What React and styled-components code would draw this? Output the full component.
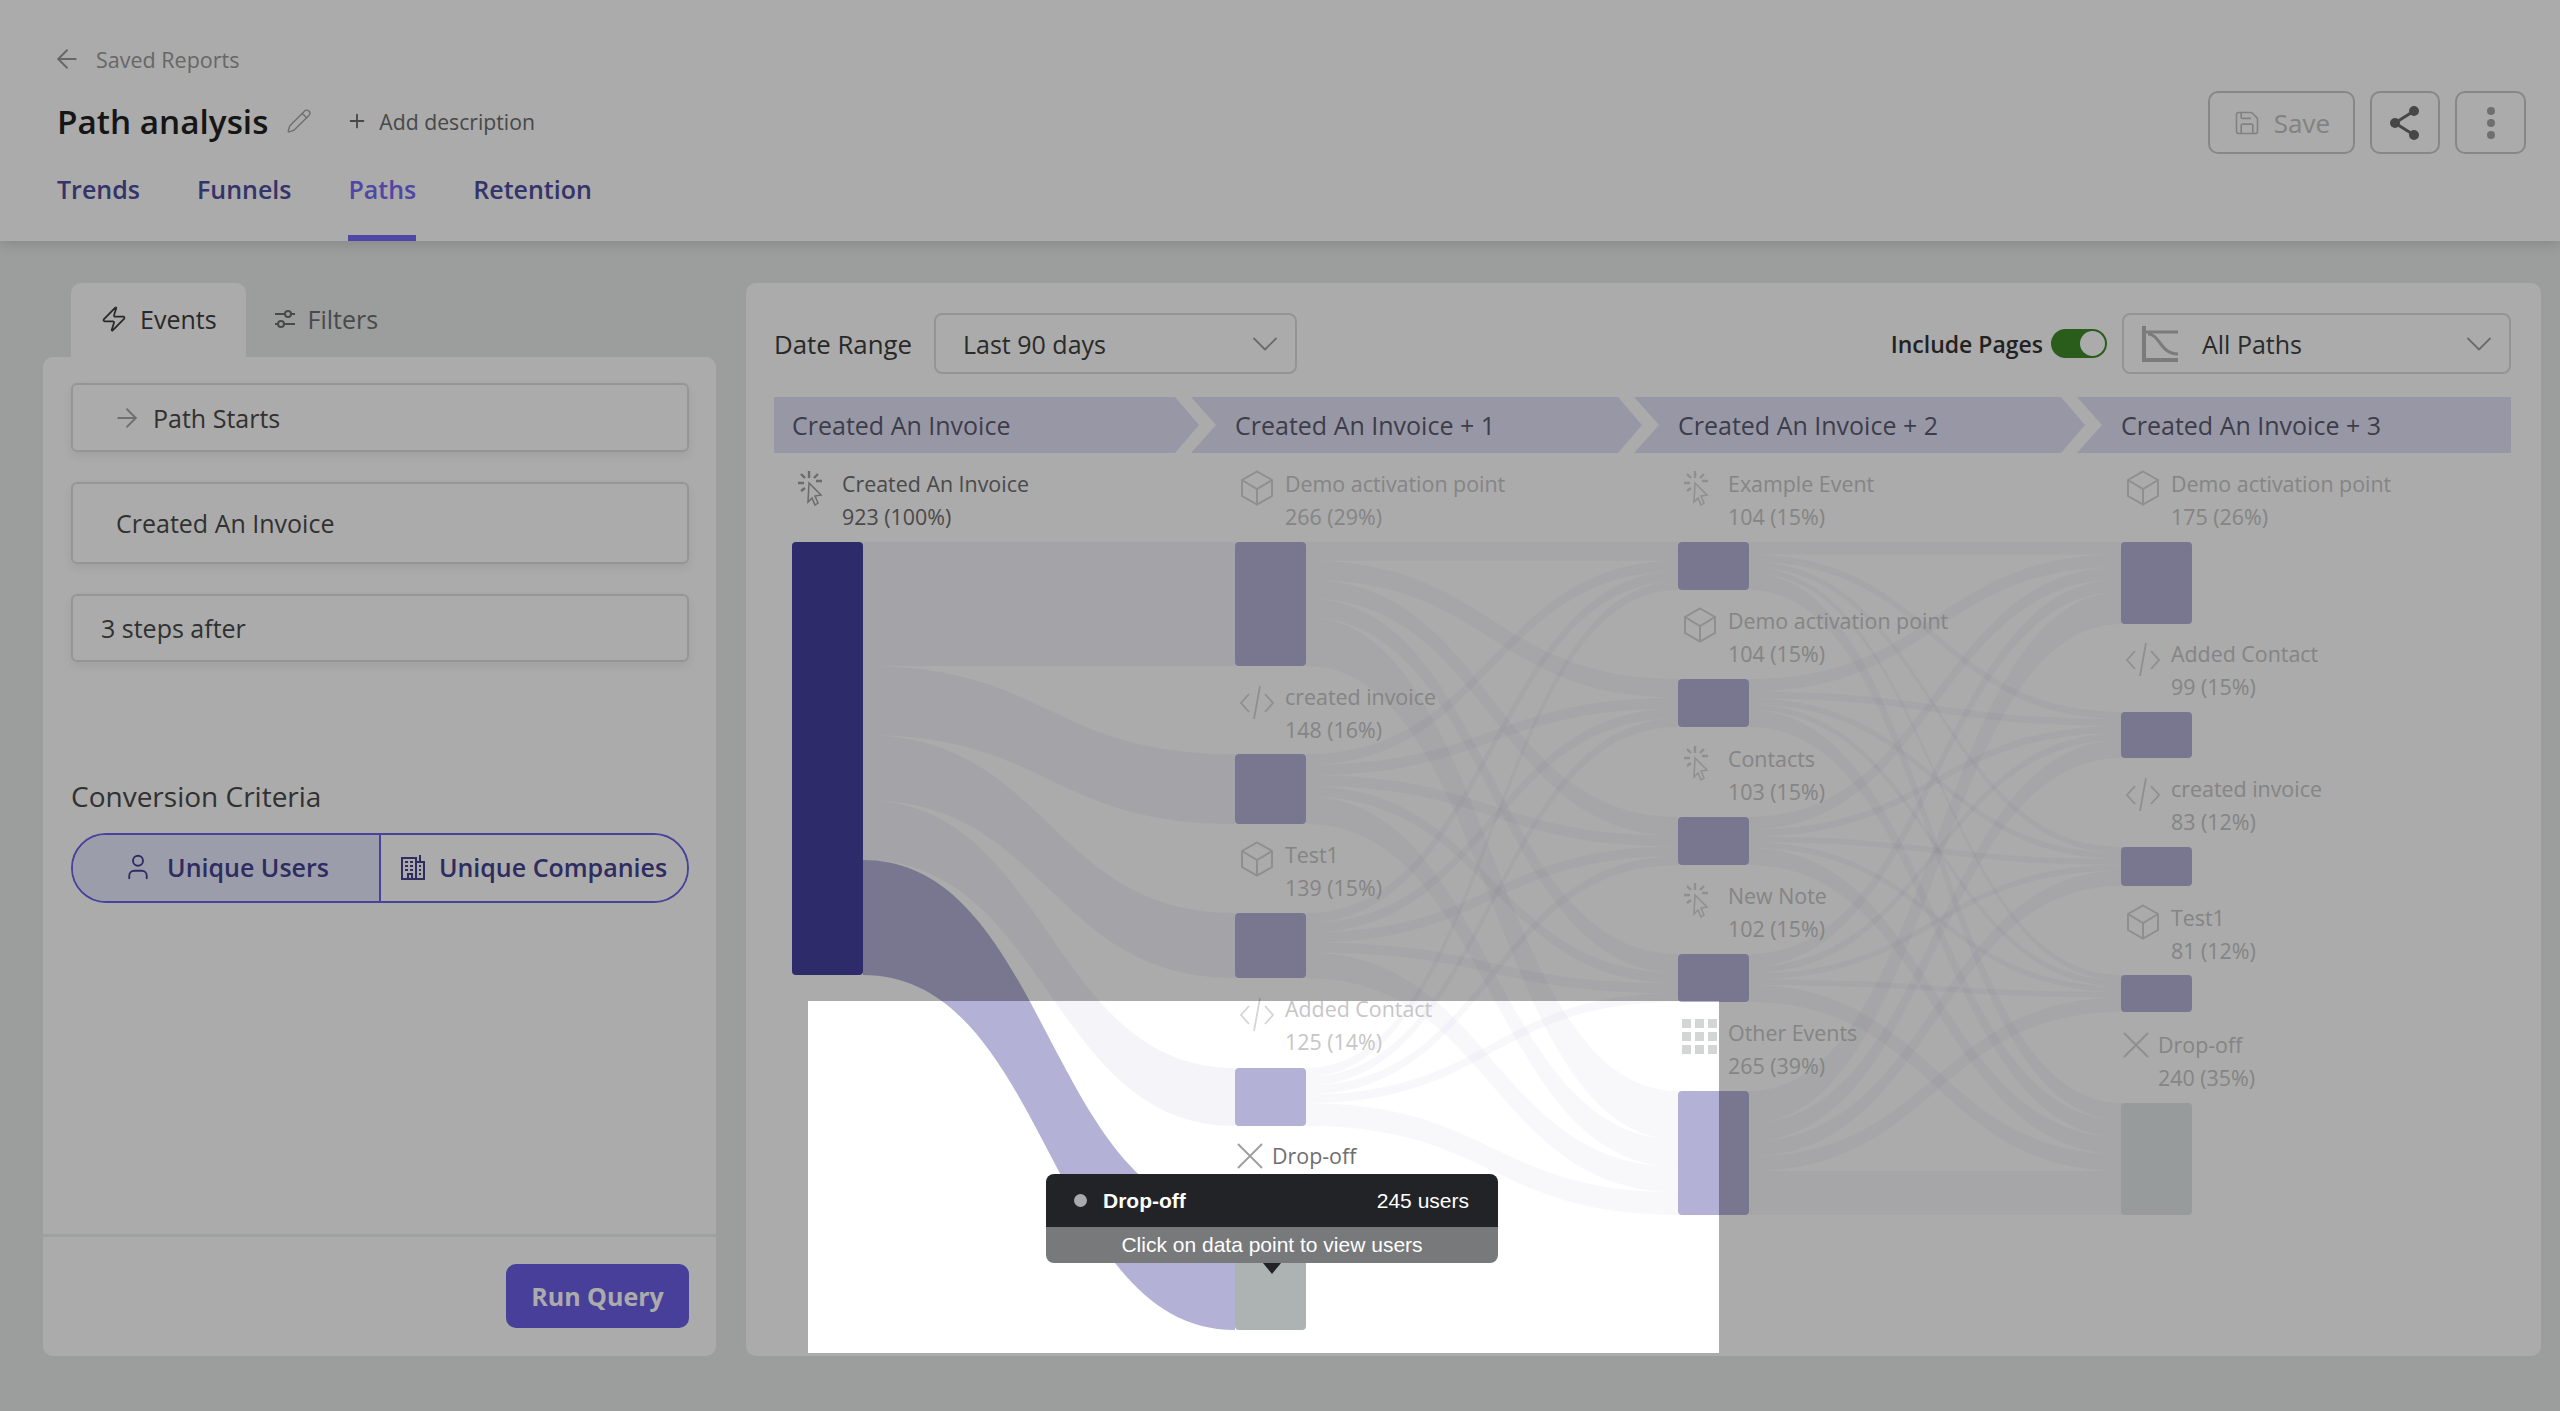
import React from "react";
import styled, { createGlobalStyle } from "styled-components";
import { ArrowLeft, ArrowRight, Pencil, Plus, Zap, User, Save, ChevronDown } from "lucide-react";

const GlobalStyle = createGlobalStyle`
  html, body {
    margin: 0;
    padding: 0;
    background: #e9ecec;
    font-family: "Open Sans", "Noto Sans", sans-serif;
  }
  * {
    box-sizing: border-box;
  }
`;

// chart origin on the page, link coordinates are page based
const CHART_X = 774;
const CHART_Y = 453;
const NODE_W = 71;
const COL_X = [792, 1235, 1678, 2122];

const columns = [
  [{ kind: "click", name: "Created An Invoice", value: "923 (100%)", line: 483, y0: 542, y1: 975, tone: "active", strong: true }],
  [
    { kind: "cube", name: "Demo activation point", value: "266 (29%)", line: 483, y0: 542, y1: 666, tone: "step" },
    { kind: "code", name: "created invoice", value: "148 (16%)", line: 696, y0: 754, y1: 824, tone: "step" },
    { kind: "cube", name: "Test1", value: "139 (15%)", line: 854, y0: 913, y1: 978, tone: "step" },
    { kind: "code", name: "Added Contact", value: "125 (14%)", line: 1008, y0: 1068, y1: 1126, tone: "step" },
    { kind: "drop", name: "Drop-off", line: 1155, y0: 1215, y1: 1330, tone: "dropActive", strong: true },
  ],
  [
    { kind: "click", name: "Example Event", value: "104 (15%)", line: 483, y0: 542, y1: 590, tone: "step" },
    { kind: "cube", name: "Demo activation point", value: "104 (15%)", line: 620, y0: 679, y1: 727, tone: "step" },
    { kind: "click", name: "Contacts", value: "103 (15%)", line: 758, y0: 817, y1: 865, tone: "step" },
    { kind: "click", name: "New Note", value: "102 (15%)", line: 895, y0: 954, y1: 1002, tone: "step" },
    { kind: "grid", name: "Other Events", value: "265 (39%)", line: 1032, y0: 1091, y1: 1215, tone: "step" },
  ],
  [
    { kind: "cube", name: "Demo activation point", value: "175 (26%)", line: 483, y0: 542, y1: 624, tone: "step" },
    { kind: "code", name: "Added Contact", value: "99 (15%)", line: 653, y0: 712, y1: 758, tone: "step" },
    { kind: "code", name: "created invoice", value: "83 (12%)", line: 788, y0: 847, y1: 886, tone: "step" },
    { kind: "cube", name: "Test1", value: "81 (12%)", line: 917, y0: 975, y1: 1012, tone: "step" },
    { kind: "drop", name: "Drop-off", value: "240 (35%)", line: 1044, y0: 1103, y1: 1215, tone: "drop" },
  ],
];

const ribbon = (x0, a0, b0, x1, a1, b1) => {
  const xm = (x0 + x1) / 2;
  return `M${x0} ${a0}C${xm} ${a0} ${xm} ${a1} ${x1} ${a1}L${x1} ${b1}C${xm} ${b1} ${xm} ${b0} ${x0} ${b0}Z`;
};

// splits every node of one column over every node of the next one
const spread = (from, to, x0, x1) => {
  const src = from.filter((n) => n.kind !== "drop");
  const srcTotal = src.reduce((s, n) => s + n.y1 - n.y0, 0);
  const dstTotal = to.reduce((s, n) => s + n.y1 - n.y0, 0);
  const used = to.map(() => 0);
  const out = [];
  src.forEach((s) => {
    let off = 0;
    to.forEach((t, i) => {
      const a = ((s.y1 - s.y0) * (t.y1 - t.y0)) / dstTotal;
      const b = ((t.y1 - t.y0) * (s.y1 - s.y0)) / srcTotal;
      out.push(ribbon(x0, s.y0 + off, s.y0 + off + a, x1, t.y0 + used[i], t.y0 + used[i] + b));
      off += a;
      used[i] += b;
    });
  });
  return out;
};

const firstLinks = [
  ribbon(863, 542, 666, 1235, 542, 666),
  ribbon(863, 666, 735, 1235, 754, 824),
  ribbon(863, 735, 800, 1235, 913, 978),
  ribbon(863, 800, 860, 1235, 1068, 1126),
];
const crossLinks = [
  ...spread(columns[1], columns[2], 1306, 1678),
  ...spread(columns[2], columns[3], 1749, 2122),
];
const dropLink = ribbon(863, 860, 975, 1235, 1215, 1330);

const Page = styled.div`
  position: relative;
  width: 2560px;
  height: 1411px;
  overflow: hidden;
  display: flex;
  flex-direction: column;
  background: #e9ecec;
  color: #3c3c3c;
`;

const Spotlight = styled.div`
  position: absolute;
  z-index: 5;
  left: 808px;
  top: 1001px;
  width: 911px;
  height: 352px;
  box-shadow: 0 0 0 3200px rgba(0, 0, 0, 0.33);
  pointer-events: none;
`;

const Header = styled.header`
  height: 241px;
  flex: none;
  display: flex;
  justify-content: space-between;
  padding: 0 34px 0 57px;
  background: #fff;
  box-shadow: 0 2px 14px rgba(0, 0, 0, 0.16);
  z-index: 1;
`;

const HeaderLeft = styled.div`
  display: flex;
  flex-direction: column;
`;

const Crumb = styled.div`
  display: flex;
  align-items: center;
  gap: 14px;
  height: 30px;
  margin-top: 44px;
  font-size: 21.5px;
  color: #9a9a9a;
  svg {
    margin-left: -5px;
  }
`;

const TitleRow = styled.div`
  display: flex;
  align-items: center;
  height: 48px;
  margin-top: 23px;
`;

const Title = styled.h1`
  margin: 0;
  font-size: 33.3px;
  font-weight: 600;
  color: #222;
`;

const AddNote = styled.div`
  display: flex;
  align-items: center;
  gap: 11px;
  margin-left: 34px;
  font-size: 21.2px;
  color: #6c6c6c;
`;

const PencilMark = styled(Pencil)`
  margin-left: 18px;
  color: #a6a6a6;
`;

const TabRow = styled.nav`
  display: flex;
  gap: 57px;
  margin-top: 24px;
`;

const Tab = styled.div`
  height: 72px;
  padding-top: 1px;
  font-size: 25px;
  font-weight: 600;
  line-height: 38px;
  color: ${(p) => (p.$active ? "#7669f6" : "#4e4e9e")};
  border-bottom: ${(p) => (p.$active ? "6px solid #7669f6" : "6px solid transparent")};
`;

const HeaderActions = styled.div`
  display: flex;
  gap: 15px;
  margin-top: 91px;
`;

const OutlineButton = styled.button`
  display: flex;
  align-items: center;
  justify-content: center;
  gap: 13px;
  width: ${(p) => p.$w}px;
  height: 63px;
  padding: 0;
  background: #fff;
  border: 2px solid #c8cbcb;
  border-radius: 10px;
  font: 500 26px "Open Sans", sans-serif;
  color: #c2c2c2;
`;

const Body = styled.main`
  display: flex;
  gap: 30px;
  flex: 1;
  min-height: 0;
  padding: 42px 19px 55px 43px;
`;

const Side = styled.aside`
  flex: none;
  width: 673px;
  display: flex;
  flex-direction: column;
`;

const SideTabs = styled.div`
  display: flex;
  height: 74px;
  margin-left: 28px;
`;

const SideTab = styled.div`
  display: flex;
  align-items: center;
  gap: 12px;
  padding: 0 ${(p) => (p.$active ? "29px" : "28px")} 2px ${(p) => (p.$active ? "29px" : "28px")};
  border-radius: 10px 10px 0 0;
  font-size: 25px;
  font-weight: 500;
  color: ${(p) => (p.$active ? "#3c3c3c" : "#6e6e6e")};
  background: ${(p) => (p.$active ? "#fff" : "transparent")};
`;

const SideCard = styled.div`
  flex: 1;
  display: flex;
  flex-direction: column;
  background: #fff;
  border-radius: 10px;
`;

const SideForm = styled.div`
  flex: 1;
  padding: 26px 27px 0 28px;
`;

const Field = styled.div`
  display: flex;
  align-items: center;
  gap: 11px;
  height: ${(p) => p.$h}px;
  margin-bottom: 30px;
  padding-left: ${(p) => p.$pad}px;
  border: 2px solid #dde0e0;
  border-radius: 6px;
  box-shadow: 0 4px 10px rgba(0, 0, 0, 0.07);
  font-size: 25px;
  color: #4a4a4a;
  svg {
    color: #a8a8a8;
  }
`;

const SectionTitle = styled.h3`
  margin: 114px 0 17px;
  height: 40px;
  font-size: 28px;
  font-weight: 500;
  line-height: 40px;
  color: #4a4a4a;
`;

const Segments = styled.div`
  display: grid;
  grid-template-columns: 306px 1fr;
  height: 70px;
  border: 2px solid #6a63e6;
  border-radius: 35px;
  overflow: hidden;
`;

const Segment = styled.div`
  display: flex;
  align-items: center;
  justify-content: center;
  gap: 14px;
  padding-bottom: 2px;
  font-size: 25px;
  font-weight: 600;
  white-space: nowrap;
  color: #454290;
  background: ${(p) => (p.$active ? "#e9ebff" : "#fff")};
  & + & {
    border-left: 2px solid #6a63e6;
  }
`;

const SideFooter = styled.div`
  display: flex;
  justify-content: flex-end;
  height: 122px;
  padding: 27px 27px 0 0;
  border-top: 3px solid #eef0f0;
`;

const RunButton = styled.button`
  width: 183px;
  height: 64px;
  background: #6b5fe6;
  border: 0;
  border-radius: 10px;
  font: 700 25px "Open Sans", sans-serif;
  color: #fff;
`;

const Report = styled.section`
  flex: 1;
  min-width: 0;
  display: flex;
  flex-direction: column;
  padding: 30px 30px 0 28px;
  background: #fff;
  border-radius: 10px;
`;

const Toolbar = styled.div`
  display: flex;
  align-items: center;
  height: 61px;
`;

const FieldLabel = styled.span`
  font-size: 25.8px;
  font-weight: 500;
  margin-right: 22px;
  color: #3c3c3c;
`;

const Select = styled.div`
  display: flex;
  align-items: center;
  justify-content: space-between;
  width: ${(p) => p.$w}px;
  height: 61px;
  padding: 0 8px 0 ${(p) => p.$pad}px;
  border: 2px solid #dcdfdf;
  border-radius: 8px;
  font-size: 25px;
  color: #404040;
  svg.chevron {
    color: #a0a0a0;
  }
`;

const SelectText = styled.span`
  display: flex;
  align-items: center;
  gap: 24px;
`;

const Toggles = styled.div`
  display: flex;
  align-items: center;
  gap: 8px;
  margin-left: auto;
  margin-right: 15px;
  font-size: 23px;
  font-weight: 600;
  color: #333;
`;

const Toggle = styled.span`
  position: relative;
  display: block;
  width: 56px;
  height: 29px;
  border-radius: 15px;
  background: #3f8a2a;
  &::after {
    content: "";
    position: absolute;
    right: 2px;
    top: 2px;
    width: 25px;
    height: 25px;
    border-radius: 50%;
    background: #fff;
  }
`;

const Steps = styled.div`
  display: flex;
  height: 56px;
  margin-top: 23px;
`;

const Step = styled.div`
  display: flex;
  align-items: center;
  flex: none;
  width: ${(p) => p.$w}px;
  margin-left: ${(p) => (p.$first ? 0 : -8)}px;
  padding-left: ${(p) => (p.$first ? 18 : 44)}px;
  background: #e2e2f8;
  font-size: 25px;
  color: #5c5c6e;
  clip-path: ${(p) =>
    p.$first
      ? "polygon(0 0, calc(100% - 24px) 0, 100% 50%, calc(100% - 24px) 100%, 0 100%)"
      : p.$last
        ? "polygon(0 0, 100% 0, 100% 100%, 0 100%, 25px 50%)"
        : "polygon(0 0, calc(100% - 24px) 0, 100% 50%, calc(100% - 24px) 100%, 0 100%, 25px 50%)"};
`;

const Chart = styled.div`
  position: relative;
  flex: 1;
  display: grid;
  grid-template-columns: repeat(4, 443px);
  align-content: start;
  padding-left: 18px;
`;

const Links = styled.svg`
  position: absolute;
  left: 0;
  top: 0;
  width: 1737px;
  height: 900px;
  overflow: visible;
`;

const Column = styled.div`
  position: relative;
  display: flex;
  flex-direction: column;
`;

const Label = styled.div`
  position: relative;
  height: 66px;
  margin-top: ${(p) => p.$top}px;
  padding-left: ${(p) => (p.$short ? 37 : 50)}px;
  font-size: 21.4px;
  line-height: 33px;
  white-space: nowrap;
  color: ${(p) => (p.$strong ? "#6e6e6e" : "#c6c6c6")};
`;

const LabelIcon = styled.span`
  position: absolute;
  left: ${(p) => (p.$short ? 2 : 4)}px;
  top: ${(p) => (p.$short ? 4 : 3)}px;
  line-height: 0;
  color: ${(p) => (p.$strong ? "#a0a0a0" : "#d4d6d6")};
`;

const Node = styled.div`
  flex: none;
  width: ${NODE_W}px;
  height: ${(p) => p.$h}px;
  margin-top: ${(p) => p.$top}px;
  border-radius: 4px;
  background: ${(p) =>
    ({ active: "#4540a0", step: "#b3b2d6", dropActive: "#adb3b3", drop: "#e3e7e7" })[p.$tone]};
`;

const Tooltip = styled.div`
  position: absolute;
  left: 272px;
  top: 721px;
  width: 452px;
  border-radius: 8px;
  font-family: "Liberation Sans", Arial, sans-serif;
  color: #fff;
  &::after {
    content: "";
    position: absolute;
    left: 217px;
    bottom: -11px;
    border-style: solid;
    border-width: 11px 9px 0;
    border-color: #212327 transparent transparent;
  }
`;

const TipHead = styled.div`
  display: flex;
  align-items: center;
  justify-content: space-between;
  height: 53px;
  padding: 0 29px 0 28px;
  background: #212327;
  border-radius: 8px 8px 0 0;
  font-size: 21px;
`;

const TipName = styled.span`
  display: flex;
  align-items: center;
  gap: 16px;
  font-weight: 700;
  &::before {
    content: "";
    width: 13px;
    height: 13px;
    border-radius: 50%;
    background: #a9aaac;
  }
`;

const TipFoot = styled.div`
  height: 36px;
  background: #78797b;
  border-radius: 0 0 8px 8px;
  font-size: 21px;
  line-height: 35px;
  text-align: center;
`;

const ClickIcon = () => (
  <svg width="31" height="36" viewBox="0 0 31 36" fill="none" stroke="currentColor" strokeWidth="2">
    <path d="M13 1v7M2 13h6M20 11h6M5 4l4 4M22 4l-4 4M5 21l4-3" strokeWidth="2.4" />
    <path d="M13 13l12 12-6 1 3 7-3 2-3-7-4 4z" strokeWidth="1.5" />
  </svg>
);

const CubeIcon = () => (
  <svg width="36" height="36" viewBox="0 0 36 36" fill="none" stroke="currentColor" strokeWidth="2">
    <path d="M18 1.5L33 10v16l-15 8.5L3 26V10z" />
    <path d="M3 10l15 9 15-9M18 19v15" />
  </svg>
);

const CodeIcon = () => (
  <svg width="36" height="36" viewBox="0 0 36 36" fill="none" stroke="currentColor" strokeWidth="1.8">
    <path d="M10 11L2 20l8 9M26 11l8 9-8 9M21 3l-6 33" />
  </svg>
);

const GridIcon = () => (
  <svg width="36" height="36" viewBox="0 0 36 36" fill="currentColor">
    {[0, 13, 26].map((y) =>
      [0, 13, 26].map((x) => <rect key={`${x}-${y}`} x={x} y={y} width="9" height="9" />)
    )}
  </svg>
);

const DropIcon = () => (
  <svg width="26" height="26" viewBox="0 0 26 26" fill="none" stroke="currentColor" strokeWidth="2">
    <path d="M1 1l24 24M25 1L1 25" />
  </svg>
);

const icons = { click: ClickIcon, cube: CubeIcon, code: CodeIcon, grid: GridIcon, drop: DropIcon };

const FiltersIcon = () => (
  <svg width="22" height="24" viewBox="0 0 22 24" fill="none" stroke="currentColor" strokeWidth="2">
    <path d="M1 7h10M17 7h4M1 17h3M10 17h11" />
    <circle cx="14" cy="7" r="3" />
    <circle cx="7" cy="17" r="3" />
  </svg>
);

const ShareIcon = () => (
  <svg width="30" height="34" viewBox="0 0 30 34" fill="#6b6b6b" stroke="#6b6b6b" strokeWidth="3">
    <circle cx="24" cy="5" r="3.5" />
    <circle cx="5" cy="17" r="3.5" />
    <circle cx="24" cy="29" r="3.5" />
    <path d="M24 5L5 17l19 12" fill="none" />
  </svg>
);

const MoreIcon = () => (
  <svg width="10" height="34" viewBox="0 0 10 34" fill="#a6a6a6">
    <circle cx="5" cy="5" r="4" />
    <circle cx="5" cy="17" r="4" />
    <circle cx="5" cy="29" r="4" />
  </svg>
);

const PathsIcon = () => (
  <svg width="36" height="36" viewBox="0 0 36 36" fill="none" stroke="#b8b8b8" strokeWidth="3">
    <path d="M2 0v34h34" strokeWidth="4" />
    <path d="M2 6h34" />
    <path d="M6 8c12 0 12 20 30 20" />
  </svg>
);

const CompanyIcon = () => (
  <svg width="24" height="26" viewBox="0 0 24 26" fill="none" stroke="currentColor" strokeWidth="2">
    <path d="M1 25V4h14v21zM15 8h8v17h-8M7 25v-5h4v5" />
    <path d="M4 8h3M9 8h3M4 12h3M9 12h3M4 16h3M9 16h3M18 12h2M18 16h2M18 20h2M19 1v7" />
  </svg>
);

const StepColumn = ({ nodes }) => {
  let cursor = CHART_Y;
  return (
    <Column>
      {nodes.map((n) => {
        const Icon = icons[n.kind];
        const labelTop = n.line - 16.5;
        const top = labelTop - cursor;
        const nodeTop = n.y0 - (labelTop + 66);
        cursor = n.y1;
        return (
          <React.Fragment key={n.name}>
            <Label $top={top} $short={n.kind === "drop"} $strong={n.strong}>
              <LabelIcon $short={n.kind === "drop"} $strong={n.strong}>
                <Icon />
              </LabelIcon>
              {n.name}
              <br />
              {n.value}
            </Label>
            <Node $top={nodeTop} $h={n.y1 - n.y0} $tone={n.tone} />
          </React.Fragment>
        );
      })}
    </Column>
  );
};

const App = () => (
  <Page>
    <GlobalStyle />
    <Header>
      <HeaderLeft>
        <Crumb>
          <ArrowLeft size={30} strokeWidth={1.5} />
          Saved Reports
        </Crumb>
        <TitleRow>
          <Title>Path analysis</Title>
          <PencilMark size={26} strokeWidth={1.3} />
          <AddNote>
            <Plus size={22} strokeWidth={2} />
            Add description
          </AddNote>
        </TitleRow>
        <TabRow>
          <Tab>Trends</Tab>
          <Tab>Funnels</Tab>
          <Tab $active>Paths</Tab>
          <Tab>Retention</Tab>
        </TabRow>
      </HeaderLeft>
      <HeaderActions>
        <OutlineButton $w={147}>
          <Save size={28} strokeWidth={1.4} />
          Save
        </OutlineButton>
        <OutlineButton $w={70}>
          <ShareIcon />
        </OutlineButton>
        <OutlineButton $w={71}>
          <MoreIcon />
        </OutlineButton>
      </HeaderActions>
    </Header>

    <Body>
      <Side>
        <SideTabs>
          <SideTab $active>
            <Zap size={28} strokeWidth={1.5} />
            Events
          </SideTab>
          <SideTab>
            <FiltersIcon />
            Filters
          </SideTab>
        </SideTabs>
        <SideCard>
          <SideForm>
            <Field $h={69} $pad={39}>
              <ArrowRight size={30} strokeWidth={1.5} />
              Path Starts
            </Field>
            <Field $h={82} $pad={43}>
              Created An Invoice
            </Field>
            <Field $h={68} $pad={28}>
              3 steps after
            </Field>
            <SectionTitle>Conversion Criteria</SectionTitle>
            <Segments>
              <Segment $active>
                <User size={30} strokeWidth={1.5} />
                Unique Users
              </Segment>
              <Segment>
                <CompanyIcon />
                Unique Companies
              </Segment>
            </Segments>
          </SideForm>
          <SideFooter>
            <RunButton>Run Query</RunButton>
          </SideFooter>
        </SideCard>
      </Side>

      <Report>
        <Toolbar>
          <FieldLabel>Date Range</FieldLabel>
          <Select $w={363} $pad={27}>
            Last 90 days
            <ChevronDown className="chevron" size={44} strokeWidth={1} />
          </Select>
          <Toggles>
            Include Pages
            <Toggle />
          </Toggles>
          <Select $w={389} $pad={18}>
            <SelectText>
              <PathsIcon />
              All Paths
            </SelectText>
            <ChevronDown className="chevron" size={44} strokeWidth={1} />
          </Select>
        </Toolbar>
        <Steps>
          <Step $first $w={425}>Created An Invoice</Step>
          <Step $w={451}>Created An Invoice + 1</Step>
          <Step $w={451}>Created An Invoice + 2</Step>
          <Step $last $w={434}>Created An Invoice + 3</Step>
        </Steps>
        <Chart>
          <Links viewBox={`${CHART_X} ${CHART_Y} 1737 900`}>
            {firstLinks.map((d, i) => (
              <path key={i} d={d} fill="#7a78b8" fillOpacity="0.08" />
            ))}
            {crossLinks.map((d, i) => (
              <path key={i} d={d} fill="#7a78b8" fillOpacity="0.05" />
            ))}
            <path d={dropLink} fill="#b3b2d6" />
          </Links>
          {columns.map((nodes, i) => (
            <StepColumn key={COL_X[i]} nodes={nodes} />
          ))}
          <Tooltip>
            <TipHead>
              <TipName>Drop-off</TipName>
              245 users
            </TipHead>
            <TipFoot>Click on data point to view users</TipFoot>
          </Tooltip>
        </Chart>
      </Report>
    </Body>
    <Spotlight />
  </Page>
);

export default App;
